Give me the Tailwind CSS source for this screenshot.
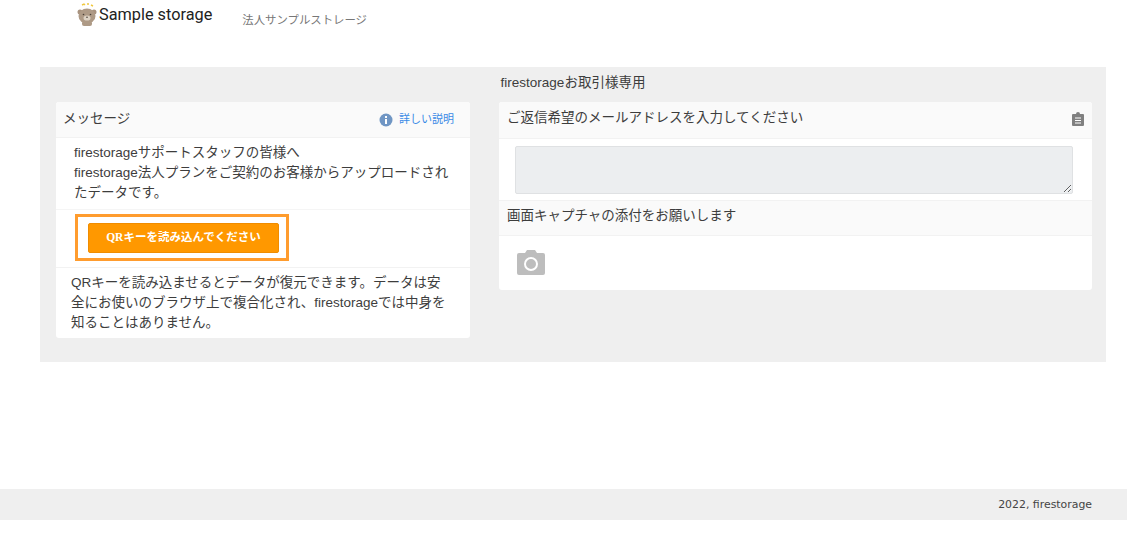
<!DOCTYPE html>
<html lang="ja">
<head>
  <meta charset="UTF-8" />
  <meta name="viewport" content="width=device-width, initial-scale=1.0" />
  <title>Sample storage</title>
  <script src="https://cdn.jsdelivr.net/npm/@tailwindcss/browser@4"></script>
</head>
<body class="bg-white h-[533px] overflow-hidden font-['Liberation_Sans','Noto_Sans_CJK_JP',sans-serif] text-[#3d3d3d]">
  <!-- header -->
  <header class="h-[67px] pl-[76px] flex items-start">
    <div class="flex items-center h-[28px] pt-px">
      <svg class="w-[22px] h-[24px] -mt-[2px]" viewBox="0 0 22 24">
        <path d="M6 3l2-1 1 1M11 2l2 0M15 3l2 1" stroke="#f0c840" stroke-width="1.4" fill="none"/>
        <circle cx="4" cy="10" r="2.5" fill="#a8927e"/>
        <circle cx="18" cy="10" r="2.5" fill="#a8927e"/>
        <ellipse cx="11" cy="14" rx="8.500" ry="7.500" fill="#ae9a86"/>
        <rect x="6" y="19" width="10" height="5" rx="2" fill="#ae9a86"/>
        <ellipse cx="11" cy="16" rx="3.500" ry="2.600" fill="#ddd2c4"/>
        <circle cx="7.500" cy="12.500" r="0.800" fill="#4a4038"/>
        <circle cx="14.500" cy="12.500" r="0.800" fill="#4a4038"/>
        <circle cx="11" cy="15.200" r="0.800" fill="#4a4038"/>
      </svg>
      <span class="ml-px text-[16.3px] leading-[28px] text-[#222] font-['Roboto',sans-serif]">Sample storage</span>
    </div>
    <span class="ml-[30px] mt-[11px] text-[11.4px] leading-[18px] text-[#777]">法人サンプルストレージ</span>
  </header>

  <!-- main panel -->
  <main class="ml-10 w-[1066px] h-[295px] bg-[#efefef]">
    <p class="h-[35px] pt-[7px] text-center text-[13.5px] leading-[18px]">firestorageお取引様専用</p>
    <div class="flex items-start pl-4 pr-[14px] justify-between">
      <!-- left card -->
      <section class="w-[414px] h-[236px] bg-white rounded-[3px] flex flex-col">
        <div class="h-[36px] bg-[#fafafa] border-b border-[#f2f2f2] rounded-t-[3px] pl-[7px] pr-4 flex justify-between">
          <h2 class="text-[13.5px] leading-[20px] pt-[7px] font-normal">メッセージ</h2>
          <a class="flex items-center text-[11px] text-[#3b8ae6]">
            <svg class="w-[14px] h-[14px] mr-[6px]" viewBox="0 0 14 14">
              <circle cx="7" cy="7" r="6.500" fill="#7096c4"/>
              <rect x="6" y="6" width="2" height="5" fill="#fff"/>
              <rect x="6" y="3" width="2" height="2" fill="#fff"/>
            </svg>
            詳しい説明
          </a>
        </div>
        <p class="h-[72px] pl-[18px] pr-4 pt-[5px] text-[13.5px] leading-[20px] border-b border-[#f5f5f5]">firestorageサポートスタッフの皆様へ<br>firestorage法人プランをご契約のお客様からアップロードされたデータです。</p>
        <div class="h-[58px] pl-[19px] pt-[4px] border-b border-[#f2f2f2]">
          <div class="w-[214px] h-[47px] border-[3px] border-[#ff9c2e] pl-[10px] pt-[6px]">
            <button class="w-[191px] h-[30px] bg-[#ff9800] border border-[#f08c00] rounded-[2px] text-white text-[11.5px] font-bold font-['Liberation_Serif','Noto_Sans_CJK_JP',serif]">QRキーを読み込んでください</button>
          </div>
        </div>
        <p class="pl-[15px] pr-5 pt-[5px] text-[13.5px] leading-[20px]">QRキーを読み込ませるとデータが復元できます。データは安全にお使いのブラウザ上で複合化され、firestorageでは中身を知ることはありません。</p>
      </section>

      <!-- right card -->
      <section class="w-[593px] h-[188px] bg-white rounded-[3px] flex flex-col">
        <div class="h-[37px] bg-[#fafafa] border-b border-[#f2f2f2] rounded-t-[3px] pl-2 pr-[8px] flex justify-between">
          <h2 class="text-[13.5px] leading-[20px] pt-[6px] font-normal">ご返信希望のメールアドレスを入力してください</h2>
          <svg class="w-[12px] h-[14px] mt-[10px]" viewBox="0 0 12 14">
            <path d="M1 2h3a2 2 0 0 1 4 0h3a1 1 0 0 1 1 1v10a1 1 0 0 1-1 1H1a1 1 0 0 1-1-1V3a1 1 0 0 1 1-1z" fill="#808080"/>
            <path d="M3 6h6M3 8.500h6M3 11h6" stroke="#fff" stroke-width="1"/>
          </svg>
        </div>
        <div class="h-[62px] pl-4 pr-[19px] pt-[7px] border-b border-[#f2f2f2]">
          <textarea disabled class="block w-full h-[48px] bg-[#eceef0] border border-[#dfe1e3] rounded-[2px] resize-y"></textarea>
        </div>
        <div class="h-[35px] bg-[#fafafa] border-b border-[#f2f2f2] pl-2">
          <h2 class="text-[13.5px] leading-[20px] pt-[5px] font-normal">画面キャプチャの添付をお願いします</h2>
        </div>
        <div class="pl-[18px] pt-[14px]">
          <svg class="w-[28px] h-[25px]" viewBox="0 0 28 25">
            <path fill-rule="evenodd" fill="#bdbdbd" d="M2 3h6l2-3h8l2 3h6a2 2 0 0 1 2 2v18a2 2 0 0 1-2 2H2a2 2 0 0 1-2-2V5a2 2 0 0 1 2-2zM14 7a7 7 0 1 0 0 14a7 7 0 1 0 0-14zM14 9a5 5 0 1 1 0 10a5 5 0 1 1 0-10z"/>
          </svg>
        </div>
      </section>
    </div>
  </main>

  <!-- footer -->
  <footer class="mt-[127px] h-[31px] bg-[#efefef] flex items-center justify-end pr-[35px] pt-px text-[10.9px] text-[#444] font-['DejaVu_Sans',sans-serif]">2022, firestorage</footer>
</body>
</html>
